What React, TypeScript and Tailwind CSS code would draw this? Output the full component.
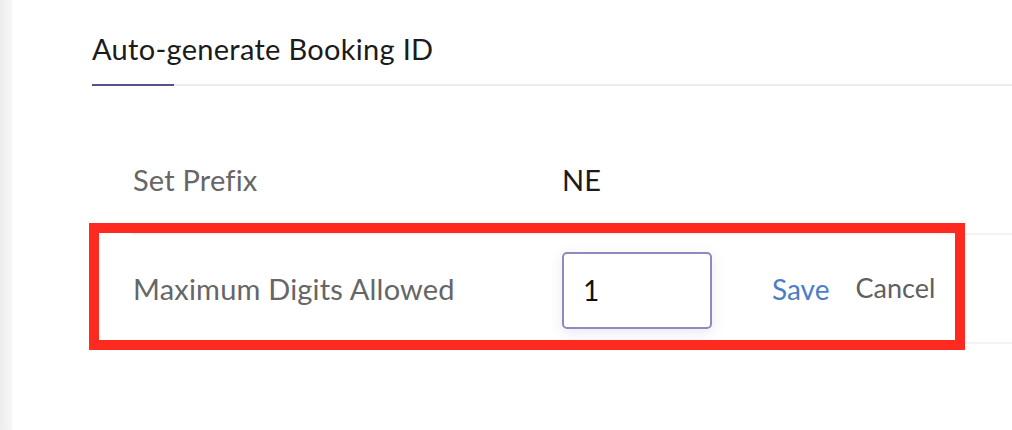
export default function App() {
  return (
    <div
      className="relative flex h-[430px] w-[1012px] overflow-hidden bg-white"
      style={{ fontFamily: 'Lato, "Open Sans", sans-serif' }}
    >
      <div className="w-3 shrink-0 bg-gradient-to-r from-[#ececec] to-[#f7f7f7]" />

      <main className="flex-1 pt-[30px]">
        <div className="ml-20 border-b-2 border-[#ececec]">
          <div className="text-[29px] leading-[37px] tracking-[0.3px] text-[#1b1b1b]">
            Auto-generate Booking ID
          </div>
          <div className="-mb-[2px] mt-[17px] h-[2px] w-[82px] bg-[#5b4f8f]" />
        </div>

        <div className="mt-10 ml-[120px]">
          <div className="flex h-[109px] items-center border-b-2 border-[#f3f3f3]">
            <span className="w-[430px] pl-[1px] text-[29px] tracking-[0.2px] text-[#666666]">
              Set Prefix
            </span>
            <span className="text-[29px] text-[#1b1b1b]">NE</span>
          </div>
          <div className="flex h-[109px] items-center border-b-2 border-[#f3f3f3]">
            <span className="w-[430px] pl-[1px] text-[29px] tracking-[0.2px] text-[#666666]">
              Maximum Digits Allowed
            </span>
            <input
              defaultValue="1"
              className="mt-[3px] h-[77px] w-[150px] rounded-[5px] border-2 border-[#8e8ac0] pl-[19px] text-[28px] text-[#111] shadow-[0_4px_14px_rgba(90,80,160,0.13)] outline-none"
            />
            <button className="ml-[60px] text-[28px] text-[#4b7ec4]">Save</button>
            <button className="ml-[26px] text-[27px] text-[#5f5f5f]">Cancel</button>
          </div>
        </div>
      </main>

      <div className="pointer-events-none absolute top-[223px] left-[89px] h-[127px] w-[876px] border-[10px] border-[#ff2a1f]" />
    </div>
  )
}
